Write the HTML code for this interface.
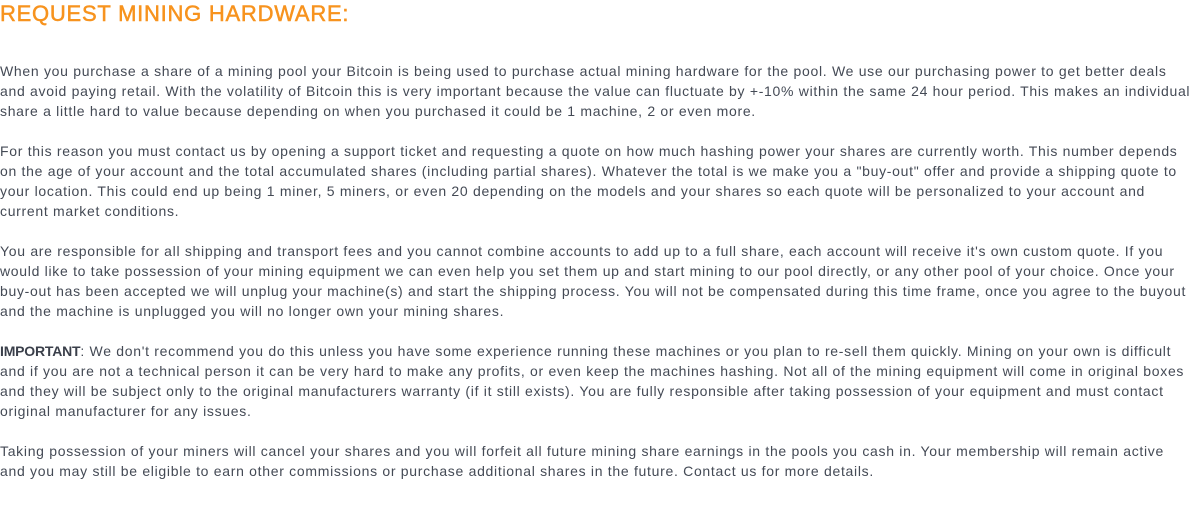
<!DOCTYPE html>
<html><head><meta charset="utf-8"><style>
body{margin:0;background:#fff;width:1195px;height:522px;overflow:hidden;font-family:"Liberation Sans",sans-serif;}
h1{position:absolute;left:0;top:1px;margin:0;font-size:22px;font-weight:normal;color:#f7931e;letter-spacing:0.75px;line-height:26px;-webkit-text-stroke:0.5px #f7931e}
.p{position:absolute;left:0;font-size:14px;line-height:20px;color:#444a55;letter-spacing:0.7px;white-space:nowrap}
b{font-weight:bold;letter-spacing:-0.2px;color:#3a3f4a}
</style></head><body>
<h1>REQUEST MINING HARDWARE:</h1>
<div class="p" style="top:61px">When you purchase a share of a mining pool your Bitcoin is being used to purchase actual mining hardware for the pool. We use our purchasing power to get better deals<br>and avoid paying retail. With the volatility of Bitcoin this is very important because the value can fluctuate by +-10% within the same 24 hour period. This makes an individual<br>share a little hard to value because depending on when you purchased it could be 1 machine, 2 or even more.</div>
<div class="p" style="top:141px">For this reason you must contact us by opening a support ticket and requesting a quote on how much hashing power your shares are currently worth. This number depends<br>on the age of your account and the total accumulated shares (including partial shares). Whatever the total is we make you a "buy-out" offer and provide a shipping quote to<br>your location. This could end up being 1 miner, 5 miners, or even 20 depending on the models and your shares so each quote will be personalized to your account and<br>current market conditions.</div>
<div class="p" style="top:241px">You are responsible for all shipping and transport fees and you cannot combine accounts to add up to a full share, each account will receive it's own custom quote. If you<br>would like to take possession of your mining equipment we can even help you set them up and start mining to our pool directly, or any other pool of your choice. Once your<br>buy-out has been accepted we will unplug your machine(s) and start the shipping process. You will not be compensated during this time frame, once you agree to the buyout<br>and the machine is unplugged you will no longer own your mining shares.</div>
<div class="p" style="top:341px"><b>IMPORTANT</b>: We don't recommend you do this unless you have some experience running these machines or you plan to re-sell them quickly. Mining on your own is difficult<br>and if you are not a technical person it can be very hard to make any profits, or even keep the machines hashing. Not all of the mining equipment will come in original boxes<br>and they will be subject only to the original manufacturers warranty (if it still exists). You are fully responsible after taking possession of your equipment and must contact<br>original manufacturer for any issues.</div>
<div class="p" style="top:441px">Taking possession of your miners will cancel your shares and you will forfeit all future mining share earnings in the pools you cash in. Your membership will remain active<br>and you may still be eligible to earn other commissions or purchase additional shares in the future. Contact us for more details.</div>
</body></html>
